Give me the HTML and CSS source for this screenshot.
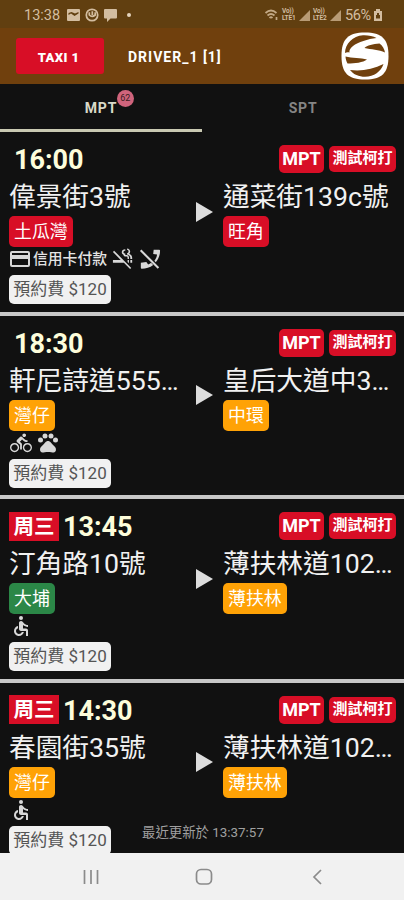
FILE: index.html
```html
<!DOCTYPE html>
<html lang="zh-Hant">
<head>
<meta charset="utf-8">
<title>Driver orders</title>
<link rel="stylesheet" href="styles.css">
</head>
<body>
<svg class="defs" aria-hidden="true">
  <symbol id="play" viewBox="0 0 18 20"><path d="M1 0L18 10L1 20Z"/></symbol>
  <symbol id="card" viewBox="0 0 20 16"><path fill-rule="evenodd" d="M2 0H18Q20 0 20 2V14Q20 16 18 16H2Q0 16 0 14V2Q0 0 2 0ZM2 2V4H18V2ZM2 8V14H18V8Z"/></symbol>
  <symbol id="nosmoke" viewBox="0 0 24 24"><path d="M1 4.300L2.300 3L21 21.700L19.700 23L13 16H1V13H9.500ZM17 13H18.500V16H17.800L17 15.200ZM20 13H22V16H20ZM18.850 6.230C19.470 5.620 19.850 4.780 19.850 3.850C19.850 2 18.350 .5 16.500 .5V2.300C17.520 2.300 18.050 2.830 18.050 3.850S17.520 5.500 16.500 5.500V7.300C18.740 7.300 20 9.030 20 10.750V12H22V10.740C22 8.720 20.720 7.120 18.850 6.230ZM14.500 7.500H16.500Q18.500 8 18.500 10V12H17V10.500Q17 9.500 16 9.300H14.900C13.500 9.300 12.500 8.500 12.500 7.300C11.300 6.500 10.650 5.700 10.650 4.800C10.650 2.500 12.150 1.250 14.500 1.250V3C13.300 3 12.500 3.600 12.500 4.600S13.500 6 14.500 6Z"/></symbol>
  <symbol id="nophone" viewBox="0 0 24 24"><path d="M1 3.300L2.600 1.700L22 21.100L20.400 22.700ZM16.800 14C18.500 11.500 19.400 9.500 19.700 7L15.500 6.500L16 2H22Q23 2 23 3C23 8 21 12.500 18.300 15.500ZM14.200 17.300L15.500 18.600C12 21.400 7.500 22.500 3 22.500Q2 22.500 2 21.500V16L8 15.200L10 18C11.500 17.600 12.200 17.100 13.100 16.200Z"/></symbol>
  <symbol id="bike" viewBox="0 0 24 24"><path d="M15.500 5.500c1.100 0 2-.9 2-2s-.9-2-2-2-2 .9-2 2 .9 2 2 2zM5 12c-2.800 0-5 2.200-5 5s2.200 5 5 5 5-2.200 5-5-2.200-5-5-5zm0 8.500c-1.900 0-3.500-1.600-3.500-3.500s1.600-3.500 3.500-3.500 3.500 1.600 3.500 3.500-1.600 3.500-3.500 3.500zm5.800-10l2.400-2.400.8.800c1.300 1.300 3 2.100 5.100 2.100V9c-1.500 0-2.700-.6-3.600-1.500l-1.900-1.900c-.5-.4-1-.6-1.600-.6s-1.100.2-1.400.6L7.800 8.400c-.4.400-.6.900-.6 1.400 0 .6.200 1.100.6 1.400L11 14v5h2v-6.200l-2.200-2.300zM19 12c-2.800 0-5 2.200-5 5s2.200 5 5 5 5-2.200 5-5-2.200-5-5-5zm0 8.500c-1.900 0-3.500-1.600-3.500-3.500s1.600-3.500 3.500-3.500 3.500 1.600 3.500 3.500-1.600 3.500-3.500 3.500z"/></symbol>
  <symbol id="paw" viewBox="2 3 20 19"><circle cx="4.500" cy="9.500" r="2.500"/><circle cx="9" cy="5.500" r="2.500"/><circle cx="15" cy="5.500" r="2.500"/><circle cx="19.500" cy="9.500" r="2.500"/><path d="M17.340 14.860c-.87-1.020-1.600-1.890-2.480-2.910-.46-.54-1.050-1.080-1.750-1.320-.7-.2-1.520-.2-2.220 0-.7.240-1.290.78-1.750 1.320-.88 1.020-1.610 1.890-2.480 2.910-1.310 1.310-2.920 2.760-2.620 4.790.29 1.020 1.020 2.030 2.330 2.320.73.150 3.060-.44 5.540-.44h.18c2.480 0 4.810.58 5.540.44 1.310-.29 2.040-1.310 2.330-2.320.31-2.040-1.300-3.490-2.620-4.790z"/></symbol>
  <symbol id="wheel" viewBox="4.500 2 15 20"><circle cx="12" cy="4" r="2"/><path d="M19 13v-2c-1.540.02-3.090-.75-4.070-1.830l-1.290-1.430c-.4-.43-1-.74-1.640-.74-1.100 0-2 .9-2 2v6c0 1.100.9 2 2 2h5v5h2v-5.500c0-1.100-.9-2-2-2h-3v-3.450c1.290 1.070 3.250 1.940 5 1.950zm-6.170 5c-.41 1.160-1.520 2-2.830 2-1.660 0-3-1.340-3-3 0-1.310.84-2.410 2-2.830V12.100c-2.280.46-4 2.480-4 4.900 0 2.760 2.240 5 5 5 2.420 0 4.440-1.720 4.900-4h-2.070z"/></symbol>
  <symbol id="signal" viewBox="0 0 12 12"><path d="M0 12L12 0V12Z"/></symbol>
</svg>
<div class="screen">
  <div class="status">
    <span class="clock">13:38</span>
    <svg class="st-pic" viewBox="0 0 13 12"><path fill-rule="evenodd" d="M1 0H12Q13 0 13 1V11Q13 12 12 12H1Q0 12 0 11V1Q0 0 1 0ZM1.500 4V6L4 4.500L7.500 7L11.500 4.500V3L8 4.500L4.500 3Z"/></svg>
    <svg class="st-what" viewBox="0 0 13 13"><circle cx="6.500" cy="6.500" r="5.300"/><path d="M4 4V6.500Q6.500 9 9.500 6.500V4M6.800 3V6.500"/></svg>
    <svg class="st-chat" viewBox="0 0 13 13"><path d="M1 0H12Q13 0 13 1V8.500Q13 9.500 12 9.500H6.500L3 13V9.500H1Q0 9.500 0 8.500V1Q0 0 1 0Z"/></svg>
    <span class="st-dot"></span>
    <span class="grow"></span>
    <svg class="st-wifi" viewBox="0 0 14 12"><path d="M1 4Q6.500-1 12 4M3 6.500Q6.500 3.500 10 6.500M5 9Q6.500 7.500 8 9"/><path d="M12 8V11"/></svg>
    <span class="lte">Vo))<br>LTE1</span>
    <svg class="st-sig"><use href="#signal"/></svg>
    <span class="lte">Vo))<br>LTE2</span>
    <svg class="st-sig"><use href="#signal"/></svg>
    <span class="pct">56%</span>
    <svg class="st-bat" viewBox="0 0 8 12"><path fill-rule="evenodd" d="M2 0H6V2H8V12H0V2H2ZM3 4V6H2V9.500H6V6H5V4Z"/></svg>
  </div>
  <header class="header">
    <div class="taxi">TAXI 1</div>
    <div class="driver">DRIVER_1 [1]</div>
    <svg class="logo" viewBox="0 0 48 48">
      <path class="logo-bg" d="M24 0.500C41 0.500 47.500 7 47.500 24S41 47.500 24 47.500S0.500 41 0.500 24S7 0.500 24 0.500Z"/>
      <g class="logo-cut">
        <path d="M4 21C4 12 12 3.500 22 3.200C27 3 32 4 35.500 6C27 7 17 10 12 14C9 16.500 8 18.500 8.500 20.500C7 20 5.500 20 4 21Z"/>
        <path d="M23.500 16C26 13.500 32 12 38.500 11.500C41.500 13.500 43.500 17 44 20.500C38 17.500 30 17.500 23.500 16Z"/>
        <path d="M4.500 24.500C11 26.500 20 25.500 26 27.500C22 30.500 14 31.500 6.500 31.500C5.500 29.500 4.500 27 4.500 24.500Z"/>
        <path d="M9 38C20 39.500 32 37.500 42.500 32C40 39.500 33 44.800 24 44.800C18 44.800 12.500 42.500 9 38Z"/>
      </g>
    </svg>
  </header>
  <nav class="tabs">
    <div class="tab active"><span class="tab-label">MPT<span class="count">62</span></span></div>
    <div class="tab"><span class="tab-label">SPT</span></div>
  </nav>
  <main class="list">
    <article class="order">
      <div class="top"><span class="time solo">16:00</span><span class="grow"></span><span class="mpt">MPT</span><span class="test">測試柯打</span></div>
      <div class="route">
        <div class="place"><div class="addr">偉景街3號</div><span class="area red">土瓜灣</span></div>
        <svg class="arrow"><use href="#play"/></svg>
        <div class="place"><div class="addr">通菜街139c號</div><span class="area red">旺角</span></div>
      </div>
      <div class="needs"><svg class="i-card"><use href="#card"/></svg><span class="pay">信用卡付款</span><svg class="i-smoke"><use href="#nosmoke"/></svg><svg class="i-phone"><use href="#nophone"/></svg></div>
      <div class="fee">預約費 $120</div>
    </article>
    <article class="order">
      <div class="top"><span class="time solo">18:30</span><span class="grow"></span><span class="mpt">MPT</span><span class="test">測試柯打</span></div>
      <div class="route">
        <div class="place"><div class="addr">軒尼詩道555…</div><span class="area amber">灣仔</span></div>
        <svg class="arrow"><use href="#play"/></svg>
        <div class="place"><div class="addr">皇后大道中3…</div><span class="area amber">中環</span></div>
      </div>
      <div class="needs"><svg class="i-bike"><use href="#bike"/></svg><svg class="i-paw"><use href="#paw"/></svg></div>
      <div class="fee">預約費 $120</div>
    </article>
    <article class="order">
      <div class="top"><span class="day">周三</span><span class="time">13:45</span><span class="grow"></span><span class="mpt">MPT</span><span class="test">測試柯打</span></div>
      <div class="route">
        <div class="place"><div class="addr">汀角路10號</div><span class="area green">大埔</span></div>
        <svg class="arrow"><use href="#play"/></svg>
        <div class="place"><div class="addr">薄扶林道102…</div><span class="area amber">薄扶林</span></div>
      </div>
      <div class="needs"><svg class="i-wheel"><use href="#wheel"/></svg></div>
      <div class="fee">預約費 $120</div>
    </article>
    <article class="order">
      <div class="top"><span class="day">周三</span><span class="time">14:30</span><span class="grow"></span><span class="mpt">MPT</span><span class="test">測試柯打</span></div>
      <div class="route">
        <div class="place"><div class="addr">春園街35號</div><span class="area amber">灣仔</span></div>
        <svg class="arrow"><use href="#play"/></svg>
        <div class="place"><div class="addr">薄扶林道102…</div><span class="area amber">薄扶林</span></div>
      </div>
      <div class="needs"><svg class="i-wheel"><use href="#wheel"/></svg></div>
      <div class="fee">預約費 $120</div>
    </article>
    <div class="updated">最近更新於 13:37:57</div>
  </main>
  <footer class="navbar">
    <svg viewBox="0 0 18 18"><path d="M2.500 2V16M9 2V16M15.500 2V16"/></svg>
    <svg viewBox="0 0 18 18"><rect x="1.500" y="1.500" width="15" height="14.500" rx="4.500"/></svg>
    <svg viewBox="0 0 18 18"><path d="M13 2L6 9L13 16"/></svg>
  </footer>
</div>
</body>
</html>
```
FILE: styles.css
```css
* { box-sizing: border-box; }
body { margin: 0; background: #111; font-family: Roboto, "Noto Sans CJK TC", sans-serif; }
svg { display: block; flex: none; }
.defs { position: absolute; width: 0; height: 0; }
.grow { flex: 1; }
.screen { width: 404px; height: 900px; display: flex; flex-direction: column; overflow: hidden; }

.status { height: 28px; flex: none; background: #613f10; color: #d3bda0; fill: #d3bda0; display: flex; align-items: center; padding: 2px 22px 0 24px; font-size: 14.5px; }
.clock { width: 43px; letter-spacing: 0; }
.st-pic { width: 13px; height: 12px; }
.st-what { width: 14px; height: 14px; margin-left: 5px; fill: none; stroke: #d3bda0; stroke-width: 1.600; }
.st-chat { width: 13px; height: 13px; margin-left: 5px; }
.st-dot { width: 4px; height: 4px; border-radius: 50%; background: #e5d5bd; margin-left: 10px; }
.st-wifi { width: 15px; height: 12px; margin-right: 3px; fill: none; stroke: #c3a986; stroke-width: 1.700; }
.lte { width: 16px; font-size: 6.500px; line-height: 7px; font-weight: 700; letter-spacing: -0.2px; white-space: nowrap; }
.st-sig { width: 11px; height: 11px; margin: 0 3px 0 1px; fill: #b89b75; }
.pct { margin-left: 1px; width: 29px; letter-spacing: -0.400px; }
.st-bat { width: 8px; height: 12px; }

.header { height: 56px; flex: none; background: #70400d; display: flex; align-items: center; padding: 0 15px 0 16px; color: #fff; font-weight: 700; }
.taxi { width: 88px; height: 36px; border-radius: 3px; background: #d80e26; display: flex; align-items: center; justify-content: center; padding-right: 3px; padding-top: 3px; font-size: 13px; font-weight: 900; letter-spacing: 0.4px; }
.driver { margin-left: 24px; flex: 1; font-size: 14px; letter-spacing: 1px; padding-top: 1px; }
.logo { width: 48px; height: 48px; }
.logo-bg { fill: #fff; }
.logo-cut { fill: #70400d; }

.tabs { height: 48px; flex: none; background: #111; display: flex; }
.tab { flex: 1; display: flex; align-items: center; justify-content: center; font-size: 14px; font-weight: 700; letter-spacing: 0.8px; color: #858585; border-bottom: 3px solid transparent; padding-top: 2px; }
.tab.active { color: #d9d9c9; border-color: #c9c9b2; }
.tab-label { position: relative; }
.count { position: absolute; left: 32px; top: -10px; width: 17px; height: 17px; border-radius: 50%; background: #d0647c; color: #3a1c22; font-size: 9px; line-height: 17px; text-align: center; letter-spacing: 0; font-weight: 400; }

.list { flex: 1; min-height: 0; position: relative; overflow: hidden; background: #111; }
.order { height: 183.670px; border-bottom: 4px solid #c8c8c8; padding: 11px 8px 0 9px; display: flex; flex-direction: column; align-items: flex-start; }
.top { align-self: stretch; height: 32px; display: flex; align-items: center; }
.time { font-size: 27px; font-weight: 700; color: #fdfddb; margin-left: 4px; letter-spacing: 0; line-height: 32px; padding-top: 2px; }
.time.solo { margin-left: 5px; }
.day { height: 29px; width: 50px; background: #d80e26; color: #fff; font-size: 20.500px; font-weight: 700; line-height: 30px; text-align: center; }
.mpt, .test { background: #d80e26; color: #fff; font-weight: 700; border-radius: 5px; text-align: center; }
.mpt { width: 45px; height: 28px; font-size: 18px; line-height: 28px; margin-right: 5px; }
.test { width: 67px; height: 26px; font-size: 15px; line-height: 25px; }
.route { align-self: stretch; display: grid; grid-template-columns: 186px 18px 1fr; align-items: center; height: 74px; }
.place { display: flex; flex-direction: column; align-items: flex-start; white-space: nowrap; margin-top: -2px; }
.place:last-child { margin-left: 10px; }
.addr { font-size: 26.700px; line-height: 45px; height: 41px; color: #f1f1f1; }
.area { height: 31px; padding: 0 5px; border-radius: 5px; color: #fff; font-size: 17.900px; line-height: 31px; }
.red { background: #d80e26; }
.amber { background: #ffa206; }
.green { background: #2b8747; }
.arrow { width: 18px; height: 20px; fill: #ddd; margin-top: -1px; }
.needs { height: 24px; margin-top: -2px; display: flex; align-items: center; fill: #d8d8d8; color: #e4e4e4; }
.i-card { width: 20px; height: 16px; margin-left: 1px; }
.pay { font-size: 14.800px; line-height: 22px; padding-bottom: 1px; margin-left: 3px; font-weight: 500; }
.i-smoke { width: 24px; height: 22px; margin-left: 4px; }
.i-phone { width: 22px; height: 22px; margin-left: 4px; }
.i-bike { width: 24px; height: 22px; }
.i-paw { width: 20px; height: 20px; margin-left: 5px; }
.i-wheel { width: 16px; height: 20px; margin-left: 4px; }
.fee { margin-top: 4px; height: 29px; width: 102px; border-radius: 5px; background: #f1f1f1; color: #555; font-size: 17px; line-height: 28px; text-align: center; white-space: nowrap; }
.updated { position: absolute; left: 142px; bottom: 10px; font-size: 13.400px; line-height: 20px; color: #a0a0a0; white-space: nowrap; }

.navbar { height: 47px; flex: none; background: #f1f1f1; display: flex; justify-content: space-between; align-items: center; padding: 0 78px 0 82px; }
.navbar svg { width: 18px; height: 18px; fill: none; stroke: #8b8b8b; stroke-width: 1.700; }
```
